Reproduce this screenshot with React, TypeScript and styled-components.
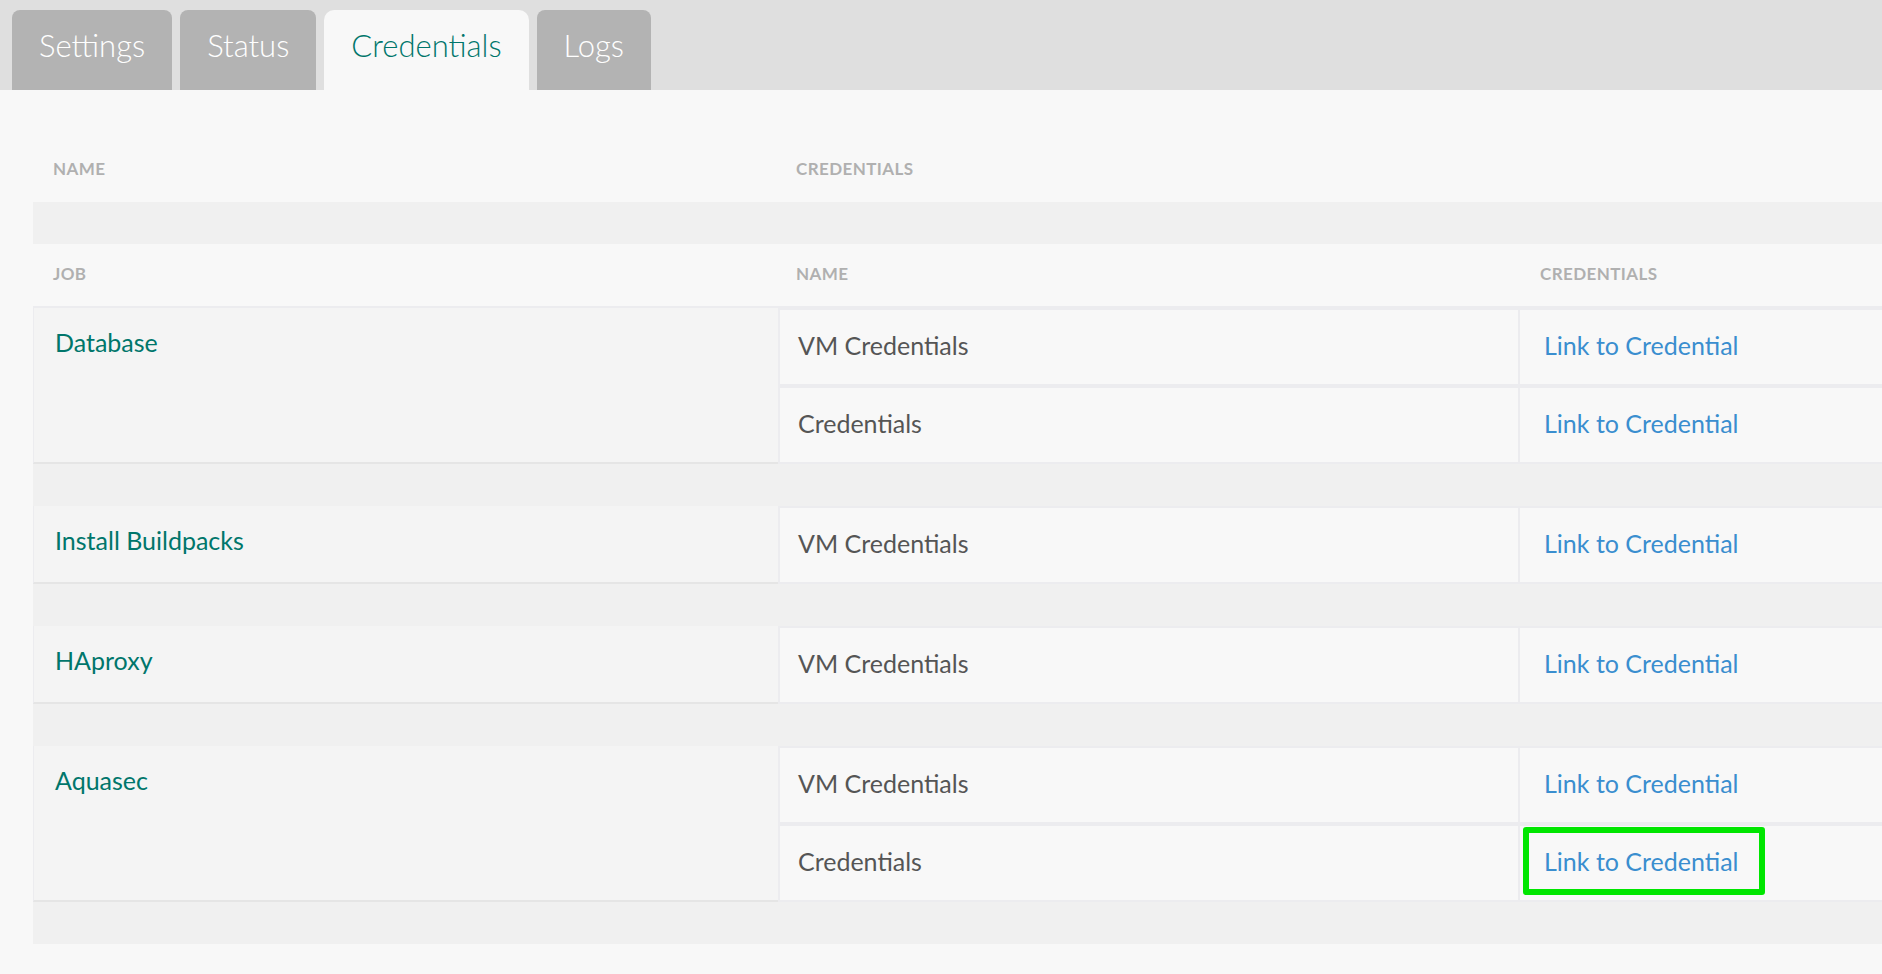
import React from "react";
import styled, { createGlobalStyle } from "styled-components";

const GlobalStyle = createGlobalStyle`
  html, body {
    margin: 0;
    padding: 0;
    background: #f8f8f8;
    font-family: "Lato", "Open Sans", sans-serif;
  }
  * { box-sizing: border-box; }
`;

const Page = styled.div`
  min-height: 974px;
  background: #f8f8f8;
  overflow: hidden;
`;

const TabBar = styled.nav`
  display: flex;
  align-items: flex-end;
  gap: 8px;
  height: 90px;
  padding: 10px 0 0 12px;
  background: #dfdfdf;
`;

const Tab = styled.div<{ $active?: boolean }>`
  display: flex;
  align-items: center;
  height: 80px;
  padding: 0 27px 10px;
  border-radius: ${(p) => (p.$active ? "10px 10px 0 0" : "8px 8px 0 0")};
  background: ${(p) => (p.$active ? "#f8f8f8" : "#b3b3b3")};
  color: ${(p) => (p.$active ? "#00766b" : "#ffffff")};
  font-size: 31px;
  font-weight: 300;
  cursor: pointer;
`;

const Content = styled.main`
  padding: 44px 0 0 33px;
`;

const OuterHeader = styled.div`
  display: grid;
  grid-template-columns: 745px 1fr;
  height: 68px;
  align-items: center;
`;

const HeaderCell = styled.div<{ $pad: number }>`
  padding-left: ${(p) => p.$pad}px;
  color: #b0b0b0;
  font-size: 17px;
  font-weight: 700;
  letter-spacing: 0.4px;
  text-transform: uppercase;
`;

const Spacer = styled.div`
  height: 42px;
  background: #f0f0f0;
`;

const InnerHeader = styled.div`
  display: grid;
  grid-template-columns: 745px 742px 1fr;
  height: 64px;
  align-items: center;
  padding-bottom: 4px;
  border-bottom: 2px solid #ececef;
`;

const Group = styled.div`
  display: grid;
  grid-template-columns: 745px 742px 1fr;
  grid-auto-rows: 78px;
`;

const JobCell = styled.div<{ $rows: number }>`
  grid-column: 1;
  grid-row: 1 / span ${(p) => p.$rows};
  background: #f4f4f4;
  border-left: 1px solid #ececef;
  border-bottom: 2px solid #e5e5e5;
  padding: 0 21px;
`;

const JobLabel = styled.a`
  display: flex;
  align-items: center;
  height: 68px;
  color: #00766b;
  font-size: 25px;
  text-decoration: none;
  cursor: pointer;
`;

const Cell = styled.div<{ $col: number; $pad: number }>`
  position: relative;
  grid-column: ${(p) => p.$col};
  display: flex;
  align-items: center;
  padding-left: ${(p) => p.$pad}px;
  padding-bottom: 4px;
  background: #f8f8f8;
  border: 2px solid #ececef;
  border-right: ${(p) => (p.$col === 3 ? "none" : "2px solid #ececef")};
  border-left: ${(p) => (p.$col === 3 ? "none" : "2px solid #ececef")};
  font-size: 25px;
  color: #555555;
`;

const CredLink = styled.a`
  color: #3a8ecf;
  text-decoration: none;
  cursor: pointer;
`;

const Highlight = styled.div`
  position: absolute;
  left: 3px;
  top: 1px;
  width: 242px;
  height: 68px;
  border: 6px solid #00e600;
  border-radius: 3px;
  pointer-events: none;
`;

type Job = {
  name: string;
  creds: string[];
  highlight?: number;
};

const jobs: Job[] = [
  { name: "Database", creds: ["VM Credentials", "Credentials"] },
  { name: "Install Buildpacks", creds: ["VM Credentials"] },
  { name: "HAproxy", creds: ["VM Credentials"] },
  { name: "Aquasec", creds: ["VM Credentials", "Credentials"], highlight: 1 },
];

const tabs = ["Settings", "Status", "Credentials", "Logs"];

export default function App() {
  return (
    <Page>
      <GlobalStyle />
      <TabBar>
        {tabs.map((t) => (
          <Tab key={t} $active={t === "Credentials"}>
            {t}
          </Tab>
        ))}
      </TabBar>
      <Content>
        <OuterHeader>
          <HeaderCell $pad={20}>Name</HeaderCell>
          <HeaderCell $pad={18}>Credentials</HeaderCell>
        </OuterHeader>
        <Spacer />
        <InnerHeader>
          <HeaderCell $pad={20}>Job</HeaderCell>
          <HeaderCell $pad={18}>Name</HeaderCell>
          <HeaderCell $pad={20}>Credentials</HeaderCell>
        </InnerHeader>
        {jobs.map((job) => (
          <React.Fragment key={job.name}>
            <Group>
              <JobCell $rows={job.creds.length}>
                <JobLabel>{job.name}</JobLabel>
              </JobCell>
              {job.creds.map((c, i) => (
                <React.Fragment key={c + i}>
                  <Cell $col={2} $pad={18} style={{ gridRow: i + 1 }}>
                    {c}
                  </Cell>
                  <Cell $col={3} $pad={24} style={{ gridRow: i + 1 }}>
                    <CredLink>Link to Credential</CredLink>
                    {job.highlight === i && <Highlight />}
                  </Cell>
                </React.Fragment>
              ))}
            </Group>
            <Spacer />
          </React.Fragment>
        ))}
      </Content>
    </Page>
  );
}
